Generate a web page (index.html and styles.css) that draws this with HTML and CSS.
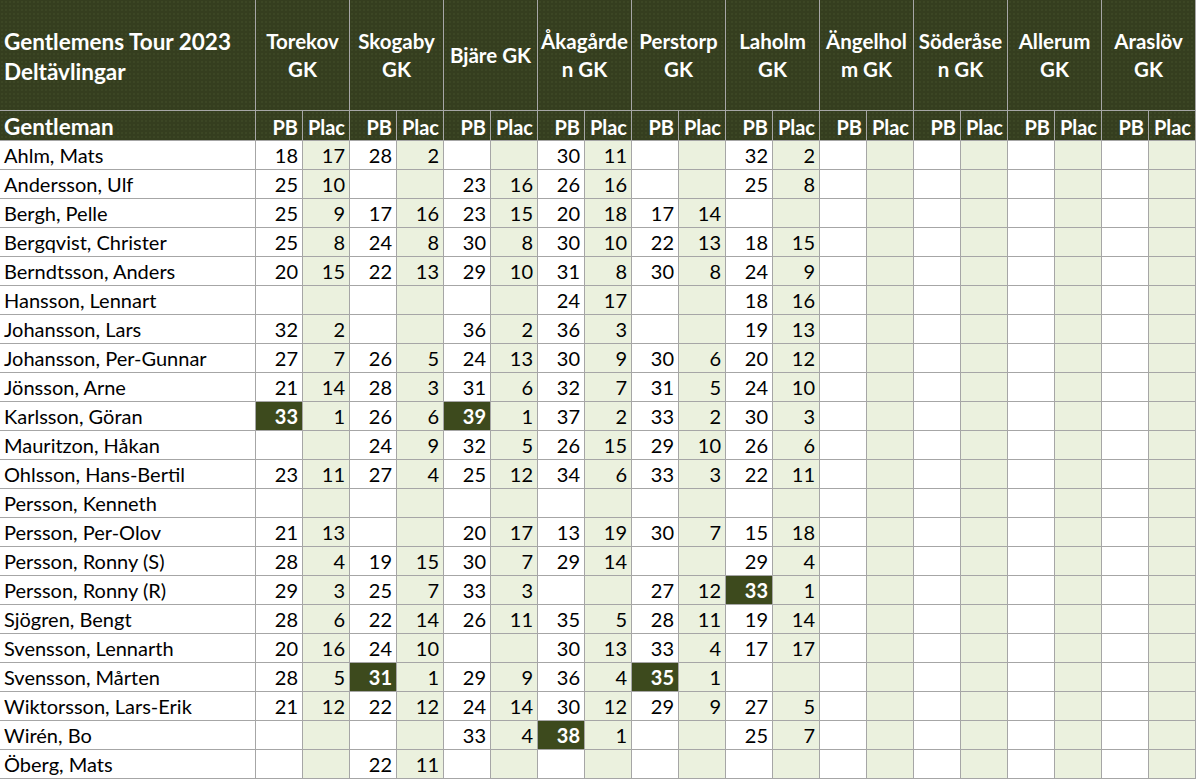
FILE: index.html
```html
<!DOCTYPE html>
<html lang="sv">
<head>
<meta charset="utf-8">
<title>Gentlemens Tour 2023</title>
<link rel="stylesheet" href="styles.css">
</head>
<body>
<div class="sheet">
  <div class="h1 title">Gentlemens Tour 2023<br>Deltävlingar</div>
  <div class="h1 course">Torekov<br>GK</div>
  <div class="h1 course">Skogaby<br>GK</div>
  <div class="h1 course">Bjäre GK</div>
  <div class="h1 course">Åkagårde<br>n GK</div>
  <div class="h1 course">Perstorp<br>GK</div>
  <div class="h1 course">Laholm<br>GK</div>
  <div class="h1 course">Ängelhol<br>m GK</div>
  <div class="h1 course">Söderåse<br>n GK</div>
  <div class="h1 course">Allerum<br>GK</div>
  <div class="h1 course">Araslöv<br>GK</div>

  <div class="h2 n">Gentleman</div>
  <div class="h2">PB</div><div class="h2">Plac</div>
  <div class="h2">PB</div><div class="h2">Plac</div>
  <div class="h2">PB</div><div class="h2">Plac</div>
  <div class="h2">PB</div><div class="h2">Plac</div>
  <div class="h2">PB</div><div class="h2">Plac</div>
  <div class="h2">PB</div><div class="h2">Plac</div>
  <div class="h2">PB</div><div class="h2">Plac</div>
  <div class="h2">PB</div><div class="h2">Plac</div>
  <div class="h2">PB</div><div class="h2">Plac</div>
  <div class="h2">PB</div><div class="h2">Plac</div>

  <div class="n">Ahlm, Mats</div>
  <div>18</div><div class="p">17</div><div>28</div><div class="p">2</div><div></div><div class="p"></div><div>30</div><div class="p">11</div><div></div><div class="p"></div><div>32</div><div class="p">2</div>
  <div></div><div class="p"></div><div></div><div class="p"></div><div></div><div class="p"></div><div></div><div class="p"></div>

  <div class="n">Andersson, Ulf</div>
  <div>25</div><div class="p">10</div><div></div><div class="p"></div><div>23</div><div class="p">16</div><div>26</div><div class="p">16</div><div></div><div class="p"></div><div>25</div><div class="p">8</div>
  <div></div><div class="p"></div><div></div><div class="p"></div><div></div><div class="p"></div><div></div><div class="p"></div>

  <div class="n">Bergh, Pelle</div>
  <div>25</div><div class="p">9</div><div>17</div><div class="p">16</div><div>23</div><div class="p">15</div><div>20</div><div class="p">18</div><div>17</div><div class="p">14</div><div></div><div class="p"></div>
  <div></div><div class="p"></div><div></div><div class="p"></div><div></div><div class="p"></div><div></div><div class="p"></div>

  <div class="n">Bergqvist, Christer</div>
  <div>25</div><div class="p">8</div><div>24</div><div class="p">8</div><div>30</div><div class="p">8</div><div>30</div><div class="p">10</div><div>22</div><div class="p">13</div><div>18</div><div class="p">15</div>
  <div></div><div class="p"></div><div></div><div class="p"></div><div></div><div class="p"></div><div></div><div class="p"></div>

  <div class="n">Berndtsson, Anders</div>
  <div>20</div><div class="p">15</div><div>22</div><div class="p">13</div><div>29</div><div class="p">10</div><div>31</div><div class="p">8</div><div>30</div><div class="p">8</div><div>24</div><div class="p">9</div>
  <div></div><div class="p"></div><div></div><div class="p"></div><div></div><div class="p"></div><div></div><div class="p"></div>

  <div class="n">Hansson, Lennart</div>
  <div></div><div class="p"></div><div></div><div class="p"></div><div></div><div class="p"></div><div>24</div><div class="p">17</div><div></div><div class="p"></div><div>18</div><div class="p">16</div>
  <div></div><div class="p"></div><div></div><div class="p"></div><div></div><div class="p"></div><div></div><div class="p"></div>

  <div class="n">Johansson, Lars</div>
  <div>32</div><div class="p">2</div><div></div><div class="p"></div><div>36</div><div class="p">2</div><div>36</div><div class="p">3</div><div></div><div class="p"></div><div>19</div><div class="p">13</div>
  <div></div><div class="p"></div><div></div><div class="p"></div><div></div><div class="p"></div><div></div><div class="p"></div>

  <div class="n">Johansson, Per-Gunnar</div>
  <div>27</div><div class="p">7</div><div>26</div><div class="p">5</div><div>24</div><div class="p">13</div><div>30</div><div class="p">9</div><div>30</div><div class="p">6</div><div>20</div><div class="p">12</div>
  <div></div><div class="p"></div><div></div><div class="p"></div><div></div><div class="p"></div><div></div><div class="p"></div>

  <div class="n">Jönsson, Arne</div>
  <div>21</div><div class="p">14</div><div>28</div><div class="p">3</div><div>31</div><div class="p">6</div><div>32</div><div class="p">7</div><div>31</div><div class="p">5</div><div>24</div><div class="p">10</div>
  <div></div><div class="p"></div><div></div><div class="p"></div><div></div><div class="p"></div><div></div><div class="p"></div>

  <div class="n">Karlsson, Göran</div>
  <div class="hi">33</div><div class="p">1</div><div>26</div><div class="p">6</div><div class="hi">39</div><div class="p">1</div><div>37</div><div class="p">2</div><div>33</div><div class="p">2</div><div>30</div><div class="p">3</div>
  <div></div><div class="p"></div><div></div><div class="p"></div><div></div><div class="p"></div><div></div><div class="p"></div>

  <div class="n">Mauritzon, Håkan</div>
  <div></div><div class="p"></div><div>24</div><div class="p">9</div><div>32</div><div class="p">5</div><div>26</div><div class="p">15</div><div>29</div><div class="p">10</div><div>26</div><div class="p">6</div>
  <div></div><div class="p"></div><div></div><div class="p"></div><div></div><div class="p"></div><div></div><div class="p"></div>

  <div class="n">Ohlsson, Hans-Bertil</div>
  <div>23</div><div class="p">11</div><div>27</div><div class="p">4</div><div>25</div><div class="p">12</div><div>34</div><div class="p">6</div><div>33</div><div class="p">3</div><div>22</div><div class="p">11</div>
  <div></div><div class="p"></div><div></div><div class="p"></div><div></div><div class="p"></div><div></div><div class="p"></div>

  <div class="n">Persson, Kenneth</div>
  <div></div><div class="p"></div><div></div><div class="p"></div><div></div><div class="p"></div><div></div><div class="p"></div><div></div><div class="p"></div><div></div><div class="p"></div>
  <div></div><div class="p"></div><div></div><div class="p"></div><div></div><div class="p"></div><div></div><div class="p"></div>

  <div class="n">Persson, Per-Olov</div>
  <div>21</div><div class="p">13</div><div></div><div class="p"></div><div>20</div><div class="p">17</div><div>13</div><div class="p">19</div><div>30</div><div class="p">7</div><div>15</div><div class="p">18</div>
  <div></div><div class="p"></div><div></div><div class="p"></div><div></div><div class="p"></div><div></div><div class="p"></div>

  <div class="n">Persson, Ronny (S)</div>
  <div>28</div><div class="p">4</div><div>19</div><div class="p">15</div><div>30</div><div class="p">7</div><div>29</div><div class="p">14</div><div></div><div class="p"></div><div>29</div><div class="p">4</div>
  <div></div><div class="p"></div><div></div><div class="p"></div><div></div><div class="p"></div><div></div><div class="p"></div>

  <div class="n">Persson, Ronny (R)</div>
  <div>29</div><div class="p">3</div><div>25</div><div class="p">7</div><div>33</div><div class="p">3</div><div></div><div class="p"></div><div>27</div><div class="p">12</div><div class="hi">33</div><div class="p">1</div>
  <div></div><div class="p"></div><div></div><div class="p"></div><div></div><div class="p"></div><div></div><div class="p"></div>

  <div class="n">Sjögren, Bengt</div>
  <div>28</div><div class="p">6</div><div>22</div><div class="p">14</div><div>26</div><div class="p">11</div><div>35</div><div class="p">5</div><div>28</div><div class="p">11</div><div>19</div><div class="p">14</div>
  <div></div><div class="p"></div><div></div><div class="p"></div><div></div><div class="p"></div><div></div><div class="p"></div>

  <div class="n">Svensson, Lennarth</div>
  <div>20</div><div class="p">16</div><div>24</div><div class="p">10</div><div></div><div class="p"></div><div>30</div><div class="p">13</div><div>33</div><div class="p">4</div><div>17</div><div class="p">17</div>
  <div></div><div class="p"></div><div></div><div class="p"></div><div></div><div class="p"></div><div></div><div class="p"></div>

  <div class="n">Svensson, Mårten</div>
  <div>28</div><div class="p">5</div><div class="hi">31</div><div class="p">1</div><div>29</div><div class="p">9</div><div>36</div><div class="p">4</div><div class="hi">35</div><div class="p">1</div><div></div><div class="p"></div>
  <div></div><div class="p"></div><div></div><div class="p"></div><div></div><div class="p"></div><div></div><div class="p"></div>

  <div class="n">Wiktorsson, Lars-Erik</div>
  <div>21</div><div class="p">12</div><div>22</div><div class="p">12</div><div>24</div><div class="p">14</div><div>30</div><div class="p">12</div><div>29</div><div class="p">9</div><div>27</div><div class="p">5</div>
  <div></div><div class="p"></div><div></div><div class="p"></div><div></div><div class="p"></div><div></div><div class="p"></div>

  <div class="n">Wirén, Bo</div>
  <div></div><div class="p"></div><div></div><div class="p"></div><div>33</div><div class="p">4</div><div class="hi">38</div><div class="p">1</div><div></div><div class="p"></div><div>25</div><div class="p">7</div>
  <div></div><div class="p"></div><div></div><div class="p"></div><div></div><div class="p"></div><div></div><div class="p"></div>

  <div class="n">Öberg, Mats</div>
  <div></div><div class="p"></div><div>22</div><div class="p">11</div><div></div><div class="p"></div><div></div><div class="p"></div><div></div><div class="p"></div><div></div><div class="p"></div>
  <div></div><div class="p"></div><div></div><div class="p"></div><div></div><div class="p"></div><div></div><div class="p"></div>
</div>
</body>
</html>
```

FILE: styles.css
```css
html, body {
  margin: 0;
  padding: 0;
  background: #ffffff;
}

.sheet {
  display: grid;
  grid-template-columns: 255px repeat(20, 46px);
  grid-template-rows: 110px 29px repeat(22, 28px);
  gap: 1px;
  background: #a6a6a6;
  width: 1196px;
  padding-bottom: 1px;
  font-family: Lato, "Noto Sans", sans-serif;
  font-size: 20px;
  color: #000;
}

.sheet > div {
  background: #ffffff;
  display: flex;
  align-items: center;
  justify-content: flex-end;
  padding-right: 4px;
  white-space: nowrap;
  line-height: 28px;
}

.sheet > div.p {
  background: #ebf1de;
}

.sheet > div.n {
  justify-content: flex-start;
  padding-left: 4px;
  padding-right: 0;
}

.sheet > div.hi {
  background: #3d4a1d;
  color: #ffffff;
  font-weight: bold;
}

.sheet > div.h1,
.sheet > div.h2 {
  background-color: #353e1f;
  background-image: radial-gradient(circle, rgba(110, 130, 80, 0.18) 0.6px, transparent 0.9px);
  background-size: 4px 4px;
  color: #ffffff;
  font-weight: bold;
}

.sheet > div.h1 {
  grid-column: span 2;
  justify-content: center;
  text-align: center;
  padding: 0;
  font-size: 20.5px;
  line-height: 28px;
}

.sheet > div.title {
  grid-column: span 1;
  justify-content: flex-start;
  text-align: left;
  padding-left: 4px;
  padding-top: 3px;
  font-size: 22.5px;
  line-height: 30px;
}

.sheet > div.h2 {
  font-size: 20px;
  padding-top: 2px;
}

.sheet > div.h2.n {
  font-size: 22.5px;
}
```
